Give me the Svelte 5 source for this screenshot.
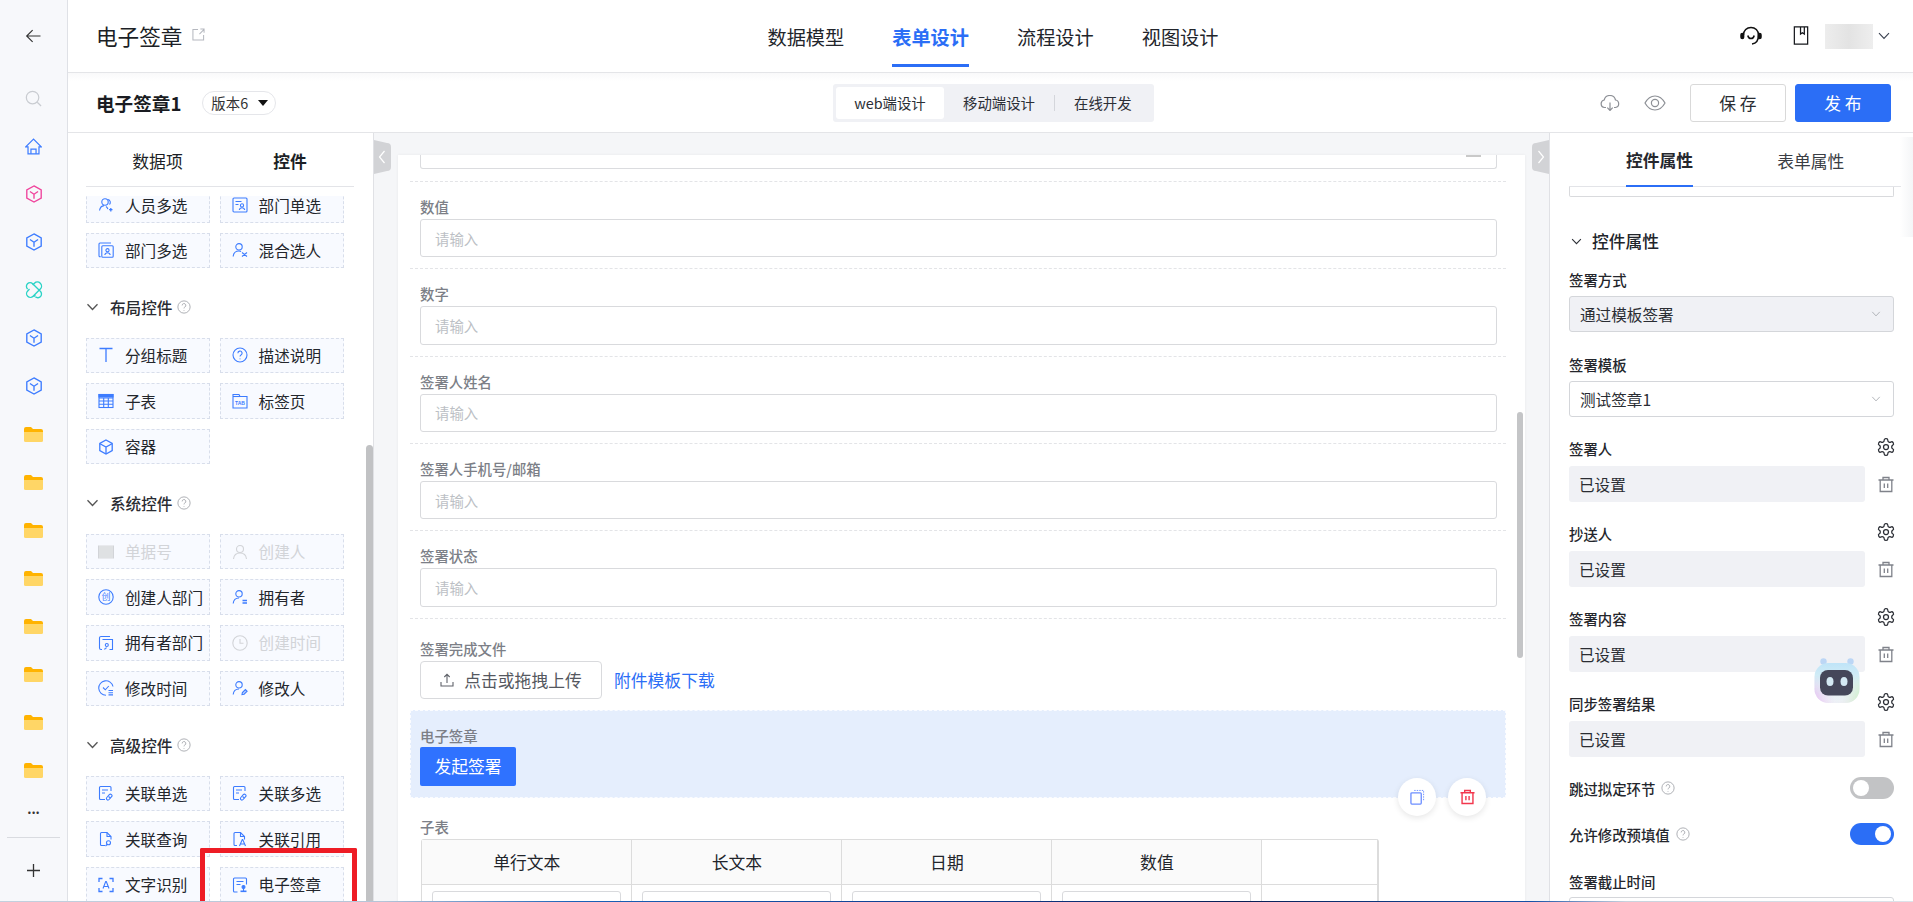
<script>
  const I = {
    people: '<circle cx="7" cy="5" r="3.2"/><path d="M10 2.500a3 3 0 0 1 1.500 5"/><path d="M1.500 13.500C2 10.500 4 8.800 6 8.600M8 9.500c1 .6 1.600 1.600 1.900 2.600"/><path d="M12.800 11v3.400M11.100 12.700h3.400" stroke-width="1.300"/>',
    dept: '<rect x="1" y="1" width="14" height="14" rx="1"/><path d="M3.500 4.500h6M3.500 7.500h3"/><circle cx="10" cy="8.400" r="1.600"/><path d="M7.300 13c.3-1.500 1.300-2.300 2.700-2.300s2.400.8 2.700 2.300"/>',
    deptm: '<path d="M2.800 14.800H2a1 1 0 0 1-1-1V2a1 1 0 0 1 1-1h11"/><rect x="3.800" y="3.800" width="11.400" height="11.400" rx="1"/><circle cx="9.500" cy="8.200" r="1.600"/><path d="M6.800 13c.3-1.500 1.300-2.300 2.700-2.300s2.400.8 2.700 2.300"/>',
    mix: '<circle cx="7" cy="4.800" r="3.200"/><path d="M1.200 14.500C1.500 11 3.800 9 7 9c.8 0 1.500.1 2.100.4"/><path d="M10 10.500l5 4M10 14.500l5-4" />',
    title: '<path d="M1.500 1.500h13M8 1.500V15" stroke-width="1.300"/>',
    help: '<circle cx="8" cy="8" r="7"/><path d="M5.900 6.200A2.100 2.100 0 1 1 9 8c-.7.4-1 .8-1 1.600"/><path d="M8 11.500v.8"/>',
    table: '<rect x="1" y="1.500" width="14" height="13"/><path d="M1 5h14M1 8h14M1 11.300h14M5.700 5v9.500M10.300 5v9.500"/><path d="M1 1.500h14V4H1z" fill="currentColor"/>',
    tab: '<path d="M1 1.500h6l1 2h7V15H1z"/><path d="M1 3.500h7"/><text x="8" y="11.500" font-size="5" font-family="Liberation Sans" font-weight="700" text-anchor="middle" fill="currentColor" stroke="none">TAB</text>',
    box: '<path d="M8 1l6.200 3.500v7L8 15l-6.200-3.500v-7z" stroke-width="1.300"/><path d="M2 4.700L8 8l6-3.300M8 8v6.500" stroke-width="1.300"/>',
    bar: '<rect x="0" y="1.500" width="16" height="13" fill="currentColor" stroke="none"/><path d="M2 1.500v13M4 1.500v13M6 1.500v13M8 1.500v13M10 1.500v13M12 1.500v13M14 1.500v13" stroke="#fff" stroke-width=".6"/>',
    user: '<circle cx="8" cy="5" r="3.500"/><path d="M1.500 15c.4-3.800 3-6 6.500-6s6.100 2.200 6.500 6"/>',
    chuang: '<circle cx="8" cy="8" r="7.200"/><text x="8" y="11.200" font-size="9" text-anchor="middle" font-family="Noto Sans CJK SC" fill="currentColor" stroke="none">创</text>',
    owner: '<circle cx="7" cy="4.800" r="3.200"/><path d="M1.200 14.500C1.500 11 3.800 9 7 9"/><path d="M10.500 11.500h4.500M10.500 14h4.500" stroke-width="1.300"/>',
    deptown: '<path d="M4 14.500H3a1.500 1.500 0 0 1-1.500-1.500V3A1.500 1.500 0 0 1 3 1.500h9"/><path d="M4.500 4.500h10v10h-3"/><circle cx="8.800" cy="10" r="1.500"/><path d="M6.500 14.500c.3-1 1-1.600 2.300-1.800"/>',
    clock: '<circle cx="8" cy="8" r="7.200"/><path d="M8 4v4.300h3.500"/>',
    modt: '<path d="M15 6.500A7.200 7.200 0 1 0 8 15.200"/><path d="M5 7.500l2.300 2.300 3.500-3.800" /><path d="M10.500 10.500H15M10.500 12.700H15M10.500 14.900H15" stroke-width="1.100"/>',
    modu: '<circle cx="7" cy="4.800" r="3.200"/><path d="M1.200 14.500C1.500 11 3.800 9 7 9"/><path d="M10 14.500l.4-2 3-3 1.700 1.700-3 3z" fill="currentColor" fill-opacity=".3"/>',
    rel: '<path d="M7 14.500H2.500a1 1 0 0 1-1-1v-11a1 1 0 0 1 1-1H12a1 1 0 0 1 1 1V6"/><path d="M4 5h6M4 8h3"/><path d="M8.800 12.500l2.500-2.800a1.500 1.500 0 0 1 2.300 2l-2.500 2.800a1.500 1.500 0 0 1-2.300-2z"/><path d="M10.500 11.500l2 1.500" />',
    query: '<path d="M7 14.500H3.500a1 1 0 0 1-1-1v-11a1 1 0 0 1 1-1H9l4 4v3"/><path d="M9 1.500v4h4"/><circle cx="10.500" cy="11.800" r="2"/><path d="M9 13.500l-1.500 1.500"/>',
    quote: '<path d="M5 14.500H3a1 1 0 0 1-1-1v-11a1 1 0 0 1 1-1h5.500l4 4v3"/><path d="M8.500 1.500v4h4"/><path d="M7.500 15l2.800-6.500h.4L13.500 15M8.500 13h4" />',
    ocr: '<path d="M1 5V1.500h3.500M11.500 1.500H15V5M15 11v3.500h-3.500M4.500 14.500H1V11" stroke-width="1.300"/><path d="M5 11.500L7.700 4.500h.6l2.700 7M6 9.500h4"/>',
    seal: '<path d="M5.500 15H2.500a1 1 0 0 1-1-1V2a1 1 0 0 1 1-1h11a1 1 0 0 1 1 1v5.500"/><path d="M4.500 4.500h7M4.500 7.500h4"/><circle cx="11.500" cy="10" r="1.500" fill="currentColor"/><path d="M8.500 14.300h6" stroke-width="1.600"/><path d="M11.500 11v3"/>'
  };

  const groups = [
    { items: [['people','人员多选'],['dept','部门单选'],['deptm','部门多选'],['mix','混合选人']] },
    { title: '布局控件', items: [['title','分组标题'],['help','描述说明'],['table','子表'],['tab','标签页'],['box','容器']] },
    { title: '系统控件', items: [['bar','单据号',1],['user','创建人',1],['chuang','创建人部门'],['owner','拥有者'],['deptown','拥有者部门'],['clock','创建时间',1],['modt','修改时间'],['modu','修改人']] },
    { title: '高级控件', items: [['rel','关联单选'],['rel','关联多选'],['query','关联查询'],['quote','关联引用'],['ocr','文字识别'],['seal','电子签章']] }
  ];
  const railColors = ['#f0439c','#3d7cff','link','#3d7cff','#3d7cff'];
  const fields = ['数值','数字','签署人姓名','签署人手机号/邮箱','签署状态'];
  const settings = ['签署人','抄送人','签署内容','同步签署结果'];
  const heads = ['单行文本','长文本','日期','数值',''];
</script>

{#snippet chev(cls)}
  <svg class={cls} viewBox="0 0 12 8"><path d="M1 1.200l5 5.300 5-5.300" /></svg>
{/snippet}
{#snippet q(cls)}
  <svg class="qm {cls || ''}" viewBox="0 0 16 16">{@html I.help}</svg>
{/snippet}
{#snippet gear()}
  <svg class="gear" viewBox="0 0 24 24"><path d="M12.220 2h-.44a2 2 0 0 0-2 2v.18a2 2 0 0 1-1 1.730l-.43.25a2 2 0 0 1-2 0l-.15-.08a2 2 0 0 0-2.730.730l-.22.38a2 2 0 0 0 .73 2.730l.15.1a2 2 0 0 1 1 1.720v.51a2 2 0 0 1-1 1.740l-.15.09a2 2 0 0 0-.73 2.730l.22.38a2 2 0 0 0 2.730.730l.15-.08a2 2 0 0 1 2 0l.43.25a2 2 0 0 1 1 1.730V20a2 2 0 0 0 2 2h.44a2 2 0 0 0 2-2v-.18a2 2 0 0 1 1-1.730l.43-.25a2 2 0 0 1 2 0l.15.08a2 2 0 0 0 2.730-.73l.22-.39a2 2 0 0 0-.73-2.730l-.15-.08a2 2 0 0 1-1-1.740v-.5a2 2 0 0 1 1-1.740l.15-.09a2 2 0 0 0 .73-2.730l-.22-.38a2 2 0 0 0-2.730-.73l-.15.08a2 2 0 0 1-2 0l-.43-.25a2 2 0 0 1-1-1.730V4a2 2 0 0 0-2-2z"/><circle cx="12" cy="12" r="3"/></svg>
{/snippet}
{#snippet trash(cls)}
  <svg class={cls} viewBox="0 0 16 16"><path d="M.5 3.500h15M5 3.500V1h6v2.500M2.200 3.500v11.500h11.600V3.500M6.300 7v4.500M9.700 7v4.500"/></svg>
{/snippet}

<div class="root">
  <nav class="rail">
    <div class="back">
      <svg viewBox="0 0 18 16"><path d="M17 8H1.500M8 1.200L1.200 8 8 14.800" /></svg>
    </div>
    <div class="rail-item"><svg class="search" viewBox="0 0 18 18"><circle cx="8" cy="8" r="6.600"/><path d="M13 13l4 4"/></svg></div>
    <div class="rail-item"><svg class="home" viewBox="0 0 18 18"><path d="M9 1.200L.8 9.300h2.400v7.500h11.600V9.300h2.400z"/><path d="M6.300 16.800v-5h5.400v5"/></svg></div>
    {#each railColors as c}
      <div class="rail-item">
        {#if c === 'link'}
          <svg class="cube link" viewBox="0 0 20 20"><path d="M8.500 4.500l2-2a4 4 0 0 1 6.500 6.500l-8 8A4 4 0 0 1 3 11l2-2"/><path d="M11.500 15.500l-2 2M3 9l-.2-.2A4 4 0 0 1 8.500 3l8.500 8.500a4 4 0 0 1-5.500 6"/></svg>
        {:else}
          <svg class="cube" viewBox="0 0 20 20" style="color:{c}"><path d="M10 1l8 4.500v9L10 19l-8-4.500v-9z"/><path d="M5.500 7.200L10 10.300l4.500-3.100M10 10.300v5"/></svg>
        {/if}
      </div>
    {/each}
    {#each Array(8) as _}
      <div class="rail-item"><svg class="folder" viewBox="0 0 19 15"><path d="M0 2a2 2 0 0 1 2-2h5l2 2h8a2 2 0 0 1 2 2v2H0z" fill="#ffb300"/><path d="M0 5h19v8.500a1.500 1.500 0 0 1-1.500 1.500h-16A1.500 1.500 0 0 1 0 13.500z" fill="#ffd666"/></svg></div>
    {/each}
    <div class="more">...</div>
    <div class="plus"><svg viewBox="0 0 14 14"><path d="M7 0v14M0 7h14"/></svg></div>
  </nav>

  <div class="main">
    <header class="top">
      <div class="name">
        <span>电子签章</span>
        <svg class="ext" viewBox="0 0 14 14"><path d="M6.500 1.500H1v11.500h11.500V7.500M8 6.500L13 1.500M9 1h4v4"/></svg>
      </div>
      <div class="nav">
        <span class="nav-tab">数据模型</span>
        <span class="nav-tab on">表单设计</span>
        <span class="nav-tab">流程设计</span>
        <span class="nav-tab">视图设计</span>
      </div>
      <div class="tools">
        <svg class="hs" viewBox="0 0 22 20"><path d="M3.500 9C3.500 4.500 6.800 1.500 11 1.500s7.500 3 7.500 7.500c0 5.500-2.500 8.500-6.500 9"/><path d="M7.800 9.500c.4 2 1.700 3 3.200 3s2.800-1 3.200-3"/><rect x="1" y="7.500" width="2.600" height="5" rx="1.300" fill="#111"/><rect x="18.400" y="7.500" width="2.600" height="5" rx="1.300" fill="#111"/></svg>
        <svg class="book" viewBox="0 0 16 20"><path d="M1 1h14v18H1z"/><path d="M7.500 1v7.500l2-1.500 2 1.500V1"/></svg>
        <div class="blur"></div>
        {@render chev('ch-user')}
      </div>
    </header>

    <div class="sub">
      <div class="sub-left">
        <b>电子签章1</b>
        <span class="ver">版本6<i class="caret"></i></span>
      </div>
      <div class="seg">
        <span class="seg-a">web端设计</span>
        <span class="seg-b">移动端设计</span>
        <i class="seg-div"></i>
        <span class="seg-c">在线开发</span>
      </div>
      <div class="actions">
        <svg class="cloud" viewBox="0 0 20 16"><path d="M6 12.500H4.500a3.800 3.800 0 0 1-.3-7.500A5.800 5.800 0 0 1 15.500 5a3.800 3.800 0 0 1 0 7.500H14"/><path d="M10 7.500v8M7.300 12.700l2.700 2.800 2.700-2.800"/></svg>
        <svg class="eye" viewBox="0 0 22 16"><path d="M1 8c2.500-4.500 6-7 10-7s7.500 2.500 10 7c-2.500 4.500-6 7-10 7S3.500 12.500 1 8z"/><circle cx="11" cy="8" r="3.600"/></svg>
        <button class="save">保 存</button>
        <button class="pub">发 布</button>
      </div>
    </div>

    <div class="body">
      <aside class="left">
        <div class="ltabs"><span>数据项</span><span class="b">控件</span></div>
        <div class="lclip">
          <div class="lscroll">
            {#each groups as g}
              {#if g.title}
                <div class="ghead">
                  {@render chev('gch')}
                  <span>{g.title}</span>
                  {@render q()}
                </div>
              {/if}
              <div class="ggrid">
                {#each g.items as it}
                  <div class="item" class:off={it[2]}>
                    <svg class="ico" viewBox="0 0 16 16">{@html I[it[0]]}</svg>
                    <span>{it[1]}</span>
                  </div>
                {/each}
              </div>
            {/each}
          </div>
        </div>
        <div class="lbar"></div>
        <div class="redbox"></div>
      </aside>

      <section class="canvas">
        <svg class="handle hl" viewBox="0 0 17 34"><path d="M0 0l13 3a4 4 0 0 1 4 4v20a4 4 0 0 1-4 4L0 34z"/><path class="w" d="M10.500 11l-5 6 5 6"/></svg>
        <svg class="handle hr" viewBox="0 0 17 34"><path d="M17 0L4 3a4 4 0 0 0-4 4v20a4 4 0 0 0 4 4l13 3z"/><path class="w" d="M6.500 11l5 6-5 6"/></svg>
        <div class="card">
          <div class="field-first">
            <div class="ghost"><i></i></div>
          </div>
          {#each fields as f}
            <div class="field">
              <div class="flabel">{f}</div>
              <div class="finput">请输入</div>
            </div>
          {/each}
          <div class="field upload">
            <div class="flabel">签署完成文件</div>
            <div class="uprow">
              <div class="upbtn">
                <svg viewBox="0 0 14 14"><path d="M7 10V1.500M4.300 4L7 1.300 9.700 4M1 9v4h12V9"/></svg>
                <span>点击或拖拽上传</span>
              </div>
              <span class="dl">附件模板下载</span>
            </div>
          </div>
          <div class="selected">
            <div class="flabel">电子签章</div>
            <div class="startbtn">发起签署</div>
            <div class="circle c1">
              <svg viewBox="0 0 16 16"><path class="dash" d="M4.500 1h10v11.500"/><rect x="1" y="3.500" width="11" height="12" rx="1" /></svg>
            </div>
            <div class="circle c2">{@render trash('red')}</div>
          </div>
          <div class="field subtable">
            <div class="flabel">子表</div>
            <div class="tbl">
              {#each heads as h, i}
                <div class="th" class:last={i === 4}>{h}</div>
              {/each}
              {#each heads as h, i}
                <div class="td" class:last={i === 4}>{#if i < 4}<div class="tinp"></div>{/if}</div>
              {/each}
            </div>
          </div>
          <div class="cbar"></div>
        </div>
      </section>

      <aside class="right">
        <div class="rtabs">
          <span class="b on">控件属性</span>
          <span>表单属性</span>
        </div>
        <div class="rclip">
          <div class="stub"></div>
          <div class="rhead">
            {@render chev('rch')}
            <span>控件属性</span>
          </div>
          <div class="rlabel first">签署方式</div>
          <div class="sel grey"><span>通过模板签署</span>{@render chev('selch')}</div>
          <div class="rlabel">签署模板</div>
          <div class="sel"><span>测试签章1</span>{@render chev('selch')}</div>
          {#each settings as s}
            <div class="setrow">
              <div class="setlabel"><span>{s}</span>{@render gear()}</div>
              <div class="setbox"><div class="val">已设置</div>{@render trash('tr')}</div>
            </div>
          {/each}
          <div class="tog-row t1">
            <span class="tl">跳过拟定环节{@render q('qr')}</span>
            <div class="tog"><i></i></div>
          </div>
          <div class="tog-row t2">
            <span class="tl">允许修改预填值{@render q('qr')}</span>
            <div class="tog on"><i></i></div>
          </div>
          <div class="rlabel last">签署截止时间</div>
          <div class="sel"></div>
        </div>
        <div class="edge"></div>
      </aside>
    </div>
  </div>

  <svg class="robot" viewBox="0 0 46 46">
    <defs>
      <linearGradient id="rb1" x1="0" y1="0" x2="0" y2="1">
        <stop offset="0" stop-color="#bfe4f8"/>
        <stop offset=".6" stop-color="#e2f3f4"/>
        <stop offset="1" stop-color="#eef1f6"/>
      </linearGradient>
      <linearGradient id="rb2" x1="0" y1="0" x2="1" y2="0">
        <stop offset="0" stop-color="#e6b8f2"/>
        <stop offset=".5" stop-color="#f2e6f6" stop-opacity="0"/>
        <stop offset="1" stop-color="#c9efc0"/>
      </linearGradient>
      <linearGradient id="rb3" x1="0" y1="0" x2="0" y2="1">
        <stop offset=".4" stop-color="#fff" stop-opacity="0"/>
        <stop offset="1" stop-color="#fff"/>
      </linearGradient>
      <mask id="rm"><rect x="0" y="0" width="46" height="46" fill="url(#rb3)"/></mask>
      <filter id="rf"><feGaussianBlur stdDeviation=".7"/></filter>
    </defs>
    <path d="M10 6l6 7M36 6l-6 7" stroke="#b9d4f2" stroke-width="1.500"/>
    <circle cx="9.500" cy="4.500" r="3.200" fill="#bcd6f5"/>
    <circle cx="36.500" cy="4.500" r="3.200" fill="#bcd6f5"/>
    <g filter="url(#rf)">
      <rect x="0.500" y="6" width="45" height="40" rx="14" fill="url(#rb1)"/>
      <rect x="0.500" y="6" width="45" height="40" rx="14" fill="url(#rb2)" mask="url(#rm)"/>
    </g>
    <rect x="6" y="13" width="33" height="25.500" rx="8" fill="#45475a"/>
    <ellipse cx="16" cy="24.500" rx="3.500" ry="4.500" fill="#d4e9f3"/>
    <ellipse cx="30" cy="24.500" rx="3.500" ry="4.500" fill="#d4e9f3"/>
  </svg>
  <div class="taskbar"></div>
</div>

<style>
  :global(body) { margin: 0; }
  .root {
    display: flex;
    width: 1913px;
    height: 902px;
    overflow: hidden;
    position: relative;
    background: #fff;
    color: #1c1f26;
    font-family: "Noto Sans CJK SC", "Noto Sans", sans-serif;
    font-size: 15.6px;
  }
  svg { fill: none; stroke: currentColor; flex: none; display: block; }

  .rail {
    width: 67px;
    flex: none;
    background: #f7f8fb;
    border-right: 1px solid #dfe1e6;
    display: flex;
    flex-direction: column;
    align-items: center;
  }
  .back { height: 74px; flex: none; display: flex; align-items: center; padding-bottom: 2px; box-sizing: border-box; }
  .back svg { width: 17px; height: 14px; stroke: #333; stroke-width: 1.3; }
  .rail-item { height: 48px; width: 100%; flex: none; display: flex; align-items: center; justify-content: center; }
  .search { width: 17px; height: 17px; stroke: #c9ccd1; stroke-width: 1.300; }
  .home { width: 17px; height: 17px; stroke: #3d7cff; stroke-width: 1.300; }
  .cube { width: 18px; height: 18px; stroke-width: 1.500; }
  .link { color: #2bd3c6; }
  .folder { width: 19px; height: 15px; stroke: none; }
  .more { height: 35px; flex: none; line-height: 30px; font-size: 13px; color: #333; font-weight: 700; }
  .plus { border-top: 1px solid #d9dbe0; width: 53px; flex: none; margin-top: 8px; padding-top: 26px; display: flex; justify-content: center; }
  .plus svg { width: 13px; height: 13px; stroke: #333; stroke-width: 1.400; }

  .main { flex: 1; min-width: 0; display: flex; flex-direction: column; }
  .top {
    height: 73px;
    box-sizing: border-box;
    border-bottom: 1px solid #e4e5e8;
    display: grid;
    grid-template-columns: 1fr auto 1fr;
    padding: 0 23px 0 28px;
    flex: none;
  }
  .name { display: flex; align-items: center; gap: 10px; font-size: 21.6px; padding-bottom: 1px; }
  .ext { width: 13px; height: 13px; stroke: #b5b8bf; stroke-width: 1.100; margin-bottom: 2px; }
  .nav { display: flex; gap: 48px; align-items: flex-start; }
  .nav-tab {
    height: 67px;
    box-sizing: border-box;
    padding-top: 10px;
    border-bottom: 3px solid transparent;
    display: flex;
    align-items: center;
    font-size: 19.200px;
    color: #22252b;
  }
  .nav-tab.on { color: #2b6ef6; font-weight: 700; border-bottom-color: #2b6ef6; }
  .tools { display: flex; align-items: center; justify-content: flex-end; }
  .hs { width: 22px; height: 20px; stroke: #111; stroke-width: 1.500; margin-right: 31px; }
  .book { width: 16px; height: 19px; stroke: #16181d; stroke-width: 1.300; margin-right: 16px; margin-bottom: 1px; }
  .blur { width: 48px; height: 25px; background: linear-gradient(90deg, #ededed, #e3e3e3 50%, #eeeeee); filter: blur(.5px); margin-right: 5px; }
  .ch-user { width: 12px; height: 8px; stroke: #3a4150; stroke-width: 1.100; }

  .sub {
    height: 60px;
    box-sizing: border-box;
    border-bottom: 1px solid #e4e5e8;
    background: linear-gradient(#f9f9fa, #fff 8px);
    display: grid;
    grid-template-columns: 1fr auto 1fr;
    align-items: center;
    padding: 0 22px 0 28px;
    flex: none;
  }
  .sub-left { display: flex; align-items: center; gap: 21px; }
  .sub-left b { font-size: 18.600px; font-weight: 700; color: #1a1c22; }
  .ver {
    height: 24px; width: 74px; box-sizing: border-box;
    border: 1px solid #e5e6ea; border-radius: 12px;
    font-size: 14.400px; color: #333;
    display: flex; align-items: center; padding-left: 8px;
  }
  .caret {
    border: 5px solid transparent; border-top: 6px solid #111; border-bottom: 0;
    margin-left: 10px;
  }
  .seg {
    height: 38px; width: 321px; box-sizing: border-box;
    background: #f0f1f5; border-radius: 3px;
    display: flex; align-items: center; padding: 3px; font-size: 14.400px; color: #2b2e35;
  }
  .seg-a { width: 108px; height: 32px; background: #fff; border-radius: 3px; display: flex; align-items: center; justify-content: center; }
  .seg-b { margin-left: 19px; width: 72px; }
  .seg-div { width: 1px; height: 16px; background: #d4d6db; margin-left: 19px; }
  .seg-c { margin-left: 19px; }
  .actions { display: flex; align-items: center; justify-content: flex-end; }
  .cloud { width: 20px; height: 16px; stroke: #8d9096; stroke-width: 1.200; margin-right: 24px; }
  .eye { width: 22px; height: 16px; stroke: #8d9096; stroke-width: 1.200; margin-right: 24px; }
  button { font-family: inherit; font-size: 16.800px; height: 38px; width: 96px; border-radius: 3px; padding: 0; cursor: pointer; }
  .save { background: #fff; border: 1px solid #d9d9d9; color: #2a2d33; }
  .pub { background: #2b6ef6; border: 1px solid #2b6ef6; color: #fff; margin-left: 9px; }

  .body { flex: 1; min-height: 0; display: flex; }
  .left {
    width: 306px; flex: none; box-sizing: border-box;
    border-right: 1px solid #e0e1e5;
    position: relative;
    display: flex; flex-direction: column;
  }
  .ltabs {
    height: 54px; flex: none; margin: 0 19px 0 18px; box-sizing: border-box;
    border-bottom: 1px solid #e3e4e8;
    display: grid; grid-template-columns: 1fr 1fr; align-items: center;
    font-size: 16.800px; text-align: center; padding: 2px 0 0 0;
  }
  .ltabs span { padding-left: 6px; }
  .ltabs span:first-child { padding-left: 9px; }
  .b { font-weight: 700; }
  .lclip { flex: 1; min-height: 0; overflow: hidden; margin-top: 9px; }
  .lscroll { margin-top: -9px; padding: 0 0 0 18px; }
  .ggrid { display: grid; grid-template-columns: 124px 124px; column-gap: 9.600px; row-gap: 10px; }
  .item {
    height: 35.600px; box-sizing: border-box;
    border: 1px dashed #d8deeb; background: #f8faff;
    display: flex; align-items: center; padding-left: 11px; gap: 11px;
    font-size: 15.600px; color: #23262c;
  }
  .item span { display: block; line-height: 1; padding-top: 1px; }
  .ico { width: 16px; height: 16px; color: #3d7cff; stroke-width: 1.100; }
  .item.off { color: #d2d4d8; }
  .item.off .ico { color: #d2d4d8; }
  .ghead { height: 24px; box-sizing: border-box; padding-bottom: 3px; margin: 28.400px 0 17px; display: flex; align-items: center; font-size: 15.600px; font-weight: 500; color: #2a2c32; }
  .gch { width: 13px; height: 8px; stroke: #555; stroke-width: 1.300; margin-right: 11px; }
  .qm { width: 14px; height: 14px; stroke: #a4a6ab; stroke-width: 1; margin-left: 5px; }
  .lbar { position: absolute; right: 0; top: 312px; bottom: 0; width: 7px; background: #c1c2c4; border-radius: 4px 4px 0 0; }
  .redbox { position: absolute; left: 132px; top: 715px; width: 157px; height: 60px; box-sizing: border-box; border: 5px solid #ee1c25; border-bottom: 0; border-radius: 2px 2px 0 0; }

  .canvas { flex: 1; min-width: 0; background: #f5f6f8; padding: 22px 0 0 24px; position: relative; }
  .handle { position: absolute; top: 7px; width: 17px; height: 34px; stroke: none; fill: #d2d3d6; }
  .handle .w { fill: none; stroke: #fff; stroke-width: 1.200; }
  .hl { left: 0; }
  .hr { right: 0; }
  .card { width: 1127px; height: 770px; background: #fff; overflow: hidden; position: relative; box-shadow: 0 0 3px rgba(0,0,0,.06); }
  .field-first { height: 27px; box-sizing: border-box; margin: 0 19px 0 12px; border-bottom: 1px dashed #e3e4e7; padding: 0 9px 0 10px; }
  .ghost { height: 14px; box-sizing: border-box; border: 1px solid #dbdcdf; border-top: 0; border-radius: 0 0 3px 3px; position: relative; }
  .ghost i { position: absolute; right: 15px; top: 0; width: 15px; height: 2px; background: #c9c9c9; }
  .field {
    height: 87.360px; box-sizing: border-box;
    margin: 0 19px 0 12px; padding: 13px 9px 0 10px;
    border-bottom: 1px dashed #e3e4e7;
  }
  .flabel { height: 24px; line-height: 24px; font-size: 14.400px; color: #7c7f87; font-weight: 500; }
  .finput {
    height: 38.400px; box-sizing: border-box;
    border: 1px solid #d9dadd; border-radius: 3px;
    display: flex; align-items: center; padding-left: 14px;
    font-size: 14.400px; color: #bcbfc5;
  }
  .upload { height: 91.500px; padding-top: 18px; border-bottom: 0; }
  .uprow { display: flex; align-items: center; gap: 12px; }
  .upbtn {
    width: 182px; height: 38px; box-sizing: border-box;
    border: 1px solid #d9dadd; border-radius: 4px;
    display: flex; align-items: center; justify-content: center; gap: 10px; color: #55585f;
    font-size: 16.800px;
  }
  .upbtn svg { width: 14px; height: 14px; stroke: #60636a; stroke-width: 1.100; }
  .dl { color: #2b6ef6; font-size: 16.800px; }
  .selected {
    height: 88px; box-sizing: border-box;
    margin: 0 19px 0 12px; padding: 13px 9px 0;
    background: #e5eefd; border: 1px dashed #fbfcff;
    position: relative;
  }
  .selected .flabel { height: 22.500px; }
  .startbtn {
    width: 96px; height: 39px; background: #2f72ff; border-radius: 2px;
    color: #fff; font-size: 16.800px;
    display: flex; align-items: center; justify-content: center;
  }
  .circle {
    position: absolute; width: 38px; height: 38px; border-radius: 50%; background: #fff;
    box-shadow: 0 2px 6px rgba(0,0,0,.1);
    display: flex; align-items: center; justify-content: center;
    bottom: -19px;
  }
  .c1 { right: 69px; color: #6c8eff; }
  .c1 svg { width: 15px; height: 16px; stroke-width: 1.400; }
  .c1 .dash { stroke-dasharray: 1.500 1.200; stroke-width: 1; }
  .c2 { right: 19px; }
  .red { width: 15px; height: 16px; stroke: #f2374d; stroke-width: 1.500; }
  .subtable { height: auto; padding-top: 17px; border-bottom: 0; }
  .tbl { display: grid; grid-template-columns: 210.400px 210px 210px 210px 115px; margin-left: 1px; border-top: 1px solid #dcdcdc; border-left: 1px solid #dcdcdc; border-right: 3px solid #dcdcdc; border-radius: 3px 3px 0 0; width: 958px; box-sizing: border-box; }
  .th { height: 45px; box-sizing: border-box; background: #fafafa; border-right: 1px solid #dcdcdc; border-bottom: 1px solid #dcdcdc; display: flex; align-items: center; justify-content: center; font-size: 16.800px; color: #22252b; }
  .th.last, .td.last { background: #fff; border-right: 0; }
  .td { height: 40px; box-sizing: border-box; border-right: 1px solid #dcdcdc; padding: 6px 10px 0; }
  .tinp { height: 34px; border: 1px solid #d9dadd; border-radius: 3px; }
  .cbar { position: absolute; right: 2px; top: 257px; width: 6px; height: 246px; background: #c4c5c7; border-radius: 3px; }

  .right { width: 364px; flex: none; box-sizing: border-box; border-left: 1px solid #e0e1e5; position: relative; }
  .rtabs {
    height: 54px; box-sizing: border-box; margin: 0 12px 0 19px;
    border-bottom: 1px solid #e3e4e8;
    display: flex; font-size: 16.800px; padding-left: 57px; gap: 84px;
  }
  .rtabs span { display: flex; align-items: center; height: 53px; box-sizing: border-box; padding-top: 2px; color: #3a3d44; }
  .rtabs .on { color: #25272d; border-bottom: 2px solid #2b6ef6; height: 54px; }
  .rclip { padding: 0 19px; }
  .stub { height: 10px; box-sizing: border-box; border: 1px solid #d9dadd; border-top: 0; border-radius: 0 0 2px 2px; }
  .rhead { margin-top: 32px; height: 24px; display: flex; align-items: center; font-size: 16.800px; font-weight: 500; color: #22252b; }
  .rch { width: 11px; height: 7px; stroke: #2c2f36; stroke-width: 1.200; margin: 0 10px 0 2px; }
  .rlabel { margin-top: 23px; height: 20px; line-height: 20px; margin-bottom: 6px; font-size: 14.400px; font-weight: 500; color: #24262c; }
  .rlabel.first { margin-top: 17px; }
  .rlabel.last { margin-top: 27px; margin-bottom: 5px; }
  .sel {
    height: 36px; box-sizing: border-box;
    border: 1px solid #d4d6da; border-radius: 3px; background: #fff;
    display: flex; align-items: center; justify-content: space-between; padding: 0 12px 0 10px;
    color: #2a2d33;
  }
  .sel.grey { background: #f0f1f5; }
  .selch { width: 10px; height: 6px; stroke: #a4a7ad; stroke-width: 1.100; }
  .setlabel { margin-top: 24px; height: 20px; display: flex; align-items: center; justify-content: space-between; font-size: 14.400px; font-weight: 500; color: #24262c; margin-bottom: 5px; }
  .setlabel span { margin-bottom: 5px; }
  .gear { width: 20px; height: 20px; stroke: #2c2f36; stroke-width: 1.500; margin: -9px -2px 0 0; }
  .setbox { display: flex; align-items: center; justify-content: space-between; }
  .val { width: 296px; height: 36px; box-sizing: border-box; background: #f0f1f5; border-radius: 3px; display: flex; align-items: center; padding-left: 10px; color: #2a2d33; }
  .tr { width: 16px; height: 17px; stroke: #7f828a; stroke-width: 1.300; }
  .tog-row { display: flex; align-items: center; justify-content: space-between; height: 22px; font-size: 14.400px; font-weight: 500; color: #24262c; }
  .t1 { margin-top: 20px; }
  .t2 { margin-top: 24px; }
  .tl { display: flex; align-items: center; }
  .qr { margin-left: 6px; }
  .tog { width: 44px; height: 22px; border-radius: 11px; background: #c2c3c5; position: relative; }
  .tog i { position: absolute; left: 3px; top: 3px; width: 16px; height: 16px; border-radius: 50%; background: #fff; }
  .tog.on { background: #2b6ef6; }
  .tog.on i { left: 25px; }
  .edge { position: absolute; right: 0; top: 4px; width: 13px; height: 100px; background: linear-gradient(90deg, rgba(240,241,244,0), #f4f5f7); }

  .robot { position: absolute; left: 1814px; top: 657px; width: 46px; height: 46px; stroke: none; }
  .taskbar {
    position: absolute; left: 0; right: 0; bottom: 0; height: 1px;
    background: linear-gradient(90deg, #c3d0de 0, #b5c5d8 20%, #1a62b8 30%, #0e3a8c 50%, #0a1f55 65%, #1550a6 80%, #c9d3de 85%, #dde3ea 100%);
  }
</style>
